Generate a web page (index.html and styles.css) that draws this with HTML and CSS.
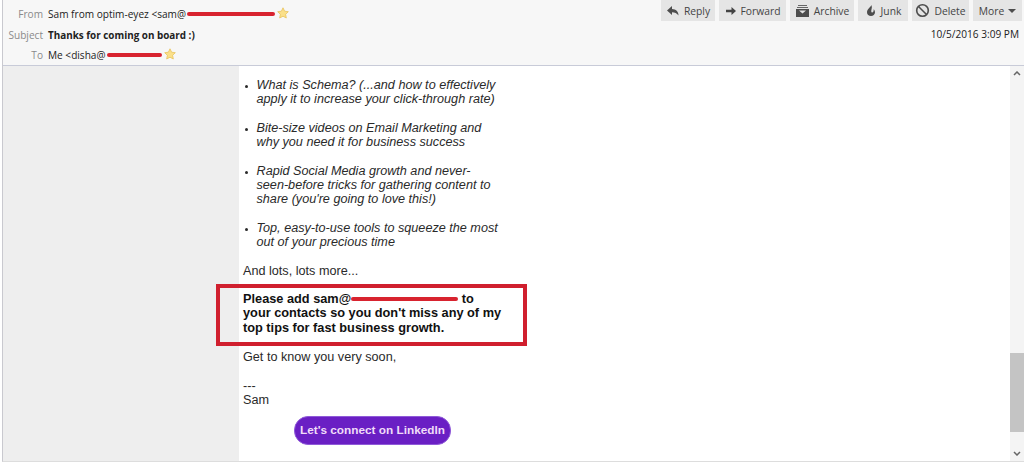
FILE: index.html
```html
<!DOCTYPE html>
<html lang="en">

<head>
    <meta charset="UTF-8">
    <meta name="viewport" content="width=device-width, initial-scale=1.0">
    <title>Thanks for coming on board :)</title>
    <link rel="stylesheet" href="styles.css">
</head>

<body>
    <div class="window">
        <header class="header">
            <div class="fields">
                <div class="field">
                    <span class="label">From</span>
                    <span class="sender">Sam from optim-eyez &lt;sam@</span>
                    <span class="scribble scribble-from"></span>
                    <svg class="star" width="12" height="12" viewBox="0 0 12 12"><path d="M6 .8l1.600 3.400 3.700.5-2.700 2.600.7 3.700L6 9.200 2.700 11l.7-3.700L.7 4.700l3.700-.5z" fill="#fae08a" stroke="#e8c35a" stroke-width=".8"/></svg>
                </div>
                <div class="field">
                    <span class="label">Subject</span>
                    <strong>Thanks for coming on board :)</strong>
                </div>
                <div class="field">
                    <span class="label">To</span>
                    <span class="sender">Me &lt;disha@</span>
                    <span class="scribble scribble-to"></span>
                    <svg class="star" width="12" height="12" viewBox="0 0 12 12"><path d="M6 .8l1.600 3.400 3.700.5-2.700 2.600.7 3.700L6 9.200 2.700 11l.7-3.700L.7 4.700l3.700-.5z" fill="#fae08a" stroke="#e8c35a" stroke-width=".8"/></svg>
                </div>
            </div>
            <div class="side">
                <div class="toolbar">
                    <button class="btn btn-reply">
                        <svg width="14" height="12" viewBox="0 0 14 12"><path d="M6 1 1 5.500 6 10V7.200c3 0 4.600.8 6.500 3.300 0-3.900-2.600-6.300-6.500-6.500z" fill="#4d4d4d"/></svg>
                        Reply
                    </button>
                    <button class="btn btn-forward">
                        <svg width="12" height="10" viewBox="0 0 12 10"><path d="M1 3.800h5.500V1L11 5 6.500 9V6.200H1z" fill="#444"/></svg>
                        Forward
                    </button>
                    <button class="btn btn-archive">
                        <svg width="15" height="14" viewBox="0 0 15 14"><path d="M3 1h9v1H3zM2 3h11v1H2z" fill="#666"/><path d="M1 5h13v8H1zM4 6.500l3.500 3 3.500-3z" fill="#4d4d4d" fill-rule="evenodd"/></svg>
                        Archive
                    </button>
                    <button class="btn btn-junk">
                        <svg width="12" height="13" viewBox="0 0 12 13"><path d="M6.500 1C5.800 3 2 5 2 8.300 2 10.800 3.800 12 6 12s4-1.300 4-3.700c0-1.300-.6-2.400-1.400-3.100.2 1.200 0 2.800-1.300 3.300C6.200 8.900 6 6.800 6.500 5.500 7 4 7 2.500 6.500 1z" fill="#4d4d4d"/></svg>
                        Junk
                    </button>
                    <button class="btn btn-delete">
                        <svg width="15" height="15" viewBox="0 0 15 15"><circle cx="7.500" cy="7.500" r="5.800" fill="none" stroke="#4d4d4d" stroke-width="1.600"/><path d="M3.500 3.500l8 8" stroke="#4d4d4d" stroke-width="1.600"/></svg>
                        Delete
                    </button>
                    <button class="btn btn-more">
                        More
                        <svg width="8" height="4" viewBox="0 0 8 4"><path d="M0 0h8L4 4z" fill="#4d4d4d"/></svg>
                    </button>
                </div>
                <div class="date">10/5/2016 3:09 PM</div>
            </div>
        </header>

        <div class="content">
            <div class="gutter"></div>
            <main class="message">
                <ul class="topics">
                    <li>What is Schema? (...and how to effectively<br>apply it to increase your click-through rate)</li>
                    <li>Bite-size videos on Email Marketing and<br>why you need it for business success</li>
                    <li>Rapid Social Media growth and never-<br>seen-before tricks for gathering content to<br>share (you're going to love this!)</li>
                    <li>Top, easy-to-use tools to squeeze the most<br>out of your precious time</li>
                </ul>
                <p class="more">And lots, lots more...</p>
                <div class="callout">
                    Please add sam@<span class="scribble scribble-mail"></span> to<br>
                    your contacts so you don't miss any of my<br>
                    top tips for fast business growth.
                </div>
                <p class="soon">Get to know you very soon,</p>
                <p class="sign">---<br>Sam</p>
                <a class="linkedin" href="#">Let's connect on LinkedIn</a>
            </main>
            <div class="scrollbar">
                <svg class="arrow" width="8" height="5" viewBox="0 0 8 5"><path d="M1 4l3-3 3 3" fill="none" stroke="#666" stroke-width="1.500"/></svg>
                <div class="track"><div class="thumb"></div></div>
                <svg class="arrow" width="8" height="5" viewBox="0 0 8 5"><path d="M1 1l3 3 3-3" fill="none" stroke="#666" stroke-width="1.500"/></svg>
            </div>
        </div>
    </div>
</body>

</html>
```

FILE: styles.css
```css
html, body {
    margin: 0;
    padding: 0;
    height: 100%;
    overflow: hidden;
    background-color: #fff;
}

.window {
    height: 462px;
    box-sizing: border-box;
    margin-left: 2px;
    border-left: 1px solid #c9c9cf;
    border-bottom: 1px solid #ddd;
    display: flex;
    flex-direction: column;
    font-family: "Open Sans", "Noto Sans", sans-serif;
    color: #222;
}

.header {
    height: 65px;
    flex: none;
    display: flex;
    justify-content: space-between;
    background-color: #f7f7f7;
    border-bottom: 1px solid #c8cbd8;
    font-size: 10.100px;
}

.fields {
    padding-top: 4px;
}

.field {
    height: 20.500px;
    display: flex;
    align-items: center;
}

.label {
    width: 40px;
    margin-right: 5px;
    text-align: right;
    color: #8a8a8a;
}

.field strong {
    font-size: 9.900px;
}

.scribble {
    display: inline-block;
    height: 4px;
    border-radius: 2px;
    background-color: #d8232f;
}

.scribble-from {
    width: 88px;
    margin-left: 1px;
}

.scribble-to {
    width: 55px;
    margin-left: 1px;
}

.scribble-mail {
    width: 107px;
    vertical-align: 2px;
}

.star {
    margin-left: 2px;
    margin-top: -3px;
}

.side {
    display: flex;
    flex-direction: column;
    align-items: flex-end;
}

.toolbar {
    display: flex;
    gap: 4px;
    height: 21px;
    padding-right: 2px;
}

.btn {
    height: 21px;
    padding: 0;
    border: 0;
    display: flex;
    align-items: center;
    justify-content: center;
    gap: 4px;
    background-color: #e5e5e5;
    font-family: inherit;
    font-size: 10.300px;
    color: #444;
}

.btn-reply { width: 54px; }
.btn-forward { width: 67px; }
.btn-archive { width: 64px; }
.btn-junk { width: 50px; }
.btn-delete { width: 57px; }
.btn-more { width: 49px; }

.date {
    margin-top: 6px;
    padding-right: 5px;
}

.content {
    flex: 1;
    min-height: 0;
    display: flex;
}

.gutter {
    width: 236px;
    flex: none;
    background-color: #eee;
}

.message {
    flex: 1;
    padding: 12px 0 0 4px;
    font-family: "Liberation Sans", Arial, sans-serif;
    font-size: 12.650px;
    line-height: 14.400px;
    color: #2a2a2a;
}

.topics {
    margin: 0;
    padding: 0 0 0 13.500px;
    font-style: italic;
}

.topics li {
    margin-bottom: 14px;
}

.topics li::marker {
    font-size: 9px;
}

.more {
    margin: 0;
}

.callout {
    width: 311px;
    margin: 6px 0 4px -27px;
    padding: 4px 0 7px 23px;
    box-sizing: border-box;
    border: 4px solid #d01f2e;
    font-size: 12.750px;
    font-weight: bold;
    color: #111;
}

.soon {
    margin: 0 0 14px;
}

.sign {
    margin: 0;
}

.linkedin {
    display: block;
    width: 157px;
    height: 29px;
    margin: 8px 0 0 51px;
    box-sizing: border-box;
    border-radius: 14px;
    background-color: #6a1fc4;
    border: 1px solid #8f5ad8;
    font-weight: bold;
    font-size: 11.800px;
    line-height: 27px;
    text-align: center;
    text-decoration: none;
    color: #f0dcf8;
}

.scrollbar {
    width: 14px;
    flex: none;
    display: flex;
    flex-direction: column;
    align-items: center;
    background-color: #f4f4f4;
}

.arrow {
    flex: none;
    margin: 5px 0;
}

.track {
    flex: 1;
    width: 100%;
    display: flex;
    flex-direction: column;
    justify-content: flex-end;
}

.thumb {
    width: 100%;
    height: 79px;
    margin-bottom: 14px;
    background-color: #c4c4c4;
}
```
